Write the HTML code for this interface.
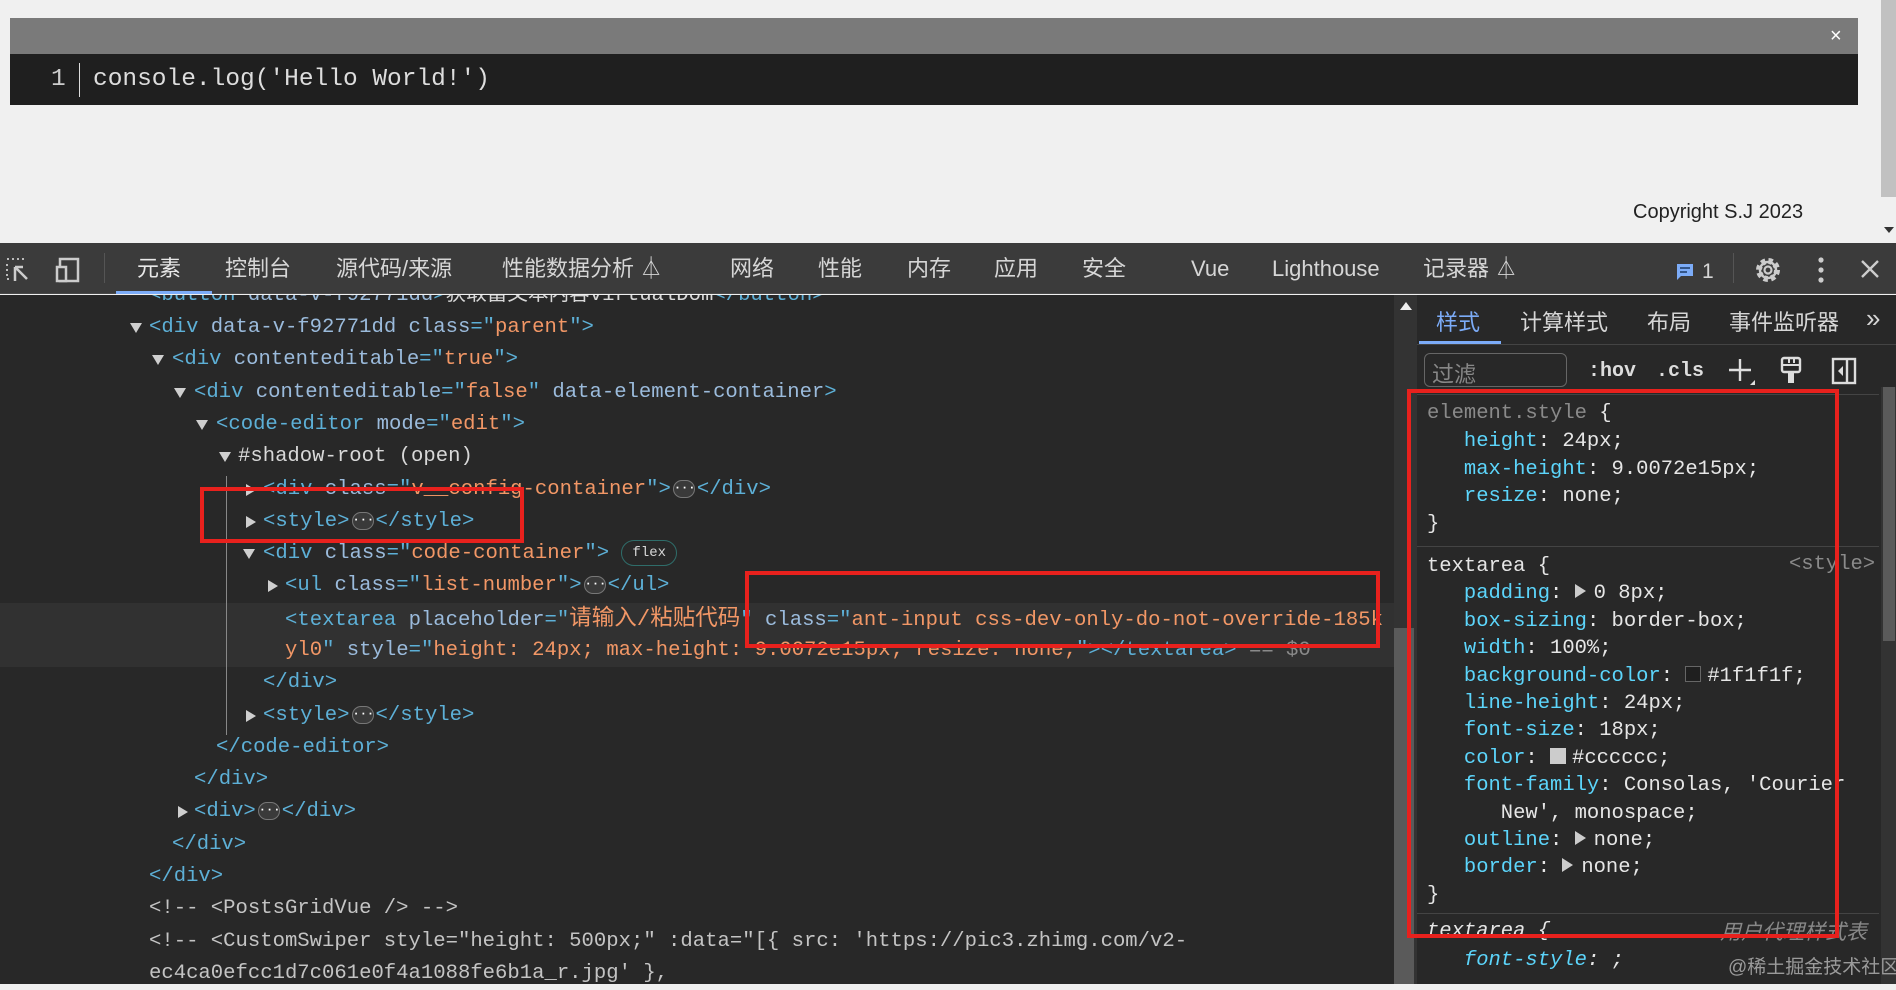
<!DOCTYPE html>
<html><head><meta charset="utf-8"><style>
*{margin:0;padding:0;box-sizing:border-box}
body{width:1896px;height:984px;overflow:hidden;background:#f0f0f0;position:relative;font-family:"Liberation Sans","Noto Sans CJK SC",sans-serif}
.a{position:absolute;white-space:pre}
.m{font-family:"Liberation Mono","Noto Sans CJK SC",monospace}
.t{color:#5db0d7}.n{color:#9bbbdc}.v{color:#f29766}.w{color:#d8d8d8}.g{color:#8a8a8a}
.p{color:#5cd5fb}.x{color:#e6e6e6}
.el{position:absolute;left:0;font-size:20.6px;line-height:32px;height:32px;white-space:pre;font-family:"Liberation Mono","Noto Sans CJK SC",monospace;color:#d8d8d8}
.cj{font-size:22.5px}
.tri{position:absolute;width:0;height:0}
.dn{border-left:6px solid transparent;border-right:6px solid transparent;border-top:10px solid #cfcfcf}
.rt{border-top:6px solid transparent;border-bottom:6px solid transparent;border-left:10px solid #cfcfcf}
.dots{display:inline-block;width:22px;height:18px;border:1px solid #777;border-radius:9px;background:#3a3a3a;color:#fff;font-size:12px;font-weight:bold;line-height:14px;text-align:center;vertical-align:middle;margin:0 2px}
.tb{position:absolute;top:256px;font-size:22px;color:#d6d6d6;line-height:26px}
.red{position:absolute;border:4px solid #e8211d}
.sr{position:absolute;left:1427px;font-size:20.5px;white-space:pre;font-family:"Liberation Mono",monospace;color:#e6e6e6}
.sw{display:inline-block;width:16px;height:16px;vertical-align:-1px;margin-right:6px}
.st{display:inline-block;width:0;height:0;border-top:7px solid transparent;border-bottom:7px solid transparent;border-left:11px solid #ccc;margin-right:8px;vertical-align:0}
</style></head><body>
<!-- top page -->
<div class="a" style="left:10px;top:18px;width:1848px;height:36px;background:#7a7a7a"></div>
<div class="a" style="left:1830px;top:25px;color:#fff;font-size:20px">×</div>
<div class="a" style="left:10px;top:54px;width:1848px;height:51px;background:#1f1f1f"></div>
<div class="a m" style="left:51px;top:64px;font-size:24.5px;color:#ccc;line-height:32px">1</div>
<div class="a" style="left:79px;top:63px;width:1px;height:34px;background:#ddd"></div>
<div class="a m" style="left:93px;top:64px;font-size:24.5px;color:#ddd;line-height:32px">console.log('Hello World!')</div>
<div class="a" style="left:1633px;top:201px;font-size:20px;color:#222">Copyright S.J 2023</div>
<div class="a" style="left:1881px;top:0;width:15px;height:197px;background:#c1c1c1"></div>
<div class="a" style="left:1884px;top:227px;width:0;height:0;border-left:5px solid transparent;border-right:5px solid transparent;border-top:6px solid #333"></div>

<!-- toolbar -->
<div class="a" style="left:0;top:243px;width:1896px;height:51px;background:#3b3b3b;border-bottom:1px solid #4a4a4a"></div>
<svg class="a" style="left:4px;top:256px" width="28" height="28" viewBox="0 0 28 28"><path d="M3 3h2M8 3h2M13 3h2M18 3h2M3 8v2M3 13v2M3 18v2M3 23h2" stroke="#bbb" stroke-width="2"/><path d="M11 11l0 14M11 11l12 12M11 11h8" stroke="#ccc" stroke-width="2.5" fill="none"/></svg>
<svg class="a" style="left:55px;top:256px" width="30" height="28" viewBox="0 0 30 28"><rect x="5" y="3" width="18" height="22" fill="none" stroke="#ccc" stroke-width="2.5"/><rect x="2" y="11" width="9" height="14" fill="#3b3b3b" stroke="#ccc" stroke-width="2.5"/></svg>
<div class="a" style="left:104px;top:253px;width:1px;height:30px;background:#555"></div>
<div class="tb" style="left:137px;color:#e8e8e8">元素</div>
<div class="a" style="left:116px;top:291px;width:96px;height:3px;background:#7cacf8"></div>
<div class="tb" style="left:225px">控制台</div>
<div class="tb" style="left:336px">源代码/来源</div>
<div class="tb" style="left:502px">性能数据分析 ⏃</div>
<div class="tb" style="left:730px">网络</div>
<div class="tb" style="left:818px">性能</div>
<div class="tb" style="left:907px">内存</div>
<div class="tb" style="left:994px">应用</div>
<div class="tb" style="left:1082px">安全</div>
<div class="tb" style="left:1191px">Vue</div>
<div class="tb" style="left:1272px">Lighthouse</div>
<div class="tb" style="left:1423px">记录器 ⏃</div>
<svg class="a" style="left:1675px;top:262px" width="20" height="20"><path d="M2 2h16v12H6l-4 4z" fill="#7cacf8"/><path d="M5 6h10M5 10h7" stroke="#1b3a66" stroke-width="1.6"/></svg>
<div class="tb" style="left:1702px;font-size:21px;top:259px">1</div>
<div class="a" style="left:1733px;top:253px;width:1px;height:30px;background:#555"></div>
<svg class="a" style="left:1753px;top:255px" width="30" height="30" viewBox="0 0 30 30"><circle cx="15" cy="15" r="9" fill="none" stroke="#ccc" stroke-width="6" stroke-dasharray="4 3.1"/><circle cx="15" cy="15" r="8" fill="none" stroke="#ccc" stroke-width="2.5"/><circle cx="15" cy="15" r="3.5" fill="none" stroke="#ccc" stroke-width="2.2"/></svg>
<svg class="a" style="left:1816px;top:256px" width="10" height="28"><circle cx="5" cy="4" r="2.6" fill="#ccc"/><circle cx="5" cy="14" r="2.6" fill="#ccc"/><circle cx="5" cy="24" r="2.6" fill="#ccc"/></svg>
<svg class="a" style="left:1859px;top:258px" width="22" height="22"><path d="M3 3l16 16M19 3L3 19" stroke="#ccc" stroke-width="2.4"/></svg>

<!-- elements panel -->
<div class="a" style="left:0;top:295px;width:1394px;height:689px;background:#282828;overflow:hidden">
 <div class="a" style="left:0;top:308px;width:1394px;height:64px;background:#313131"></div>
 <div class="a" style="left:226px;top:181px;width:1px;height:259px;background:#888"></div>
 <div class="el" style="top:-15px;left:149px"><span class="t">&lt;button</span> <span class="n">data-v-f92771dd</span><span class="t">&gt;</span>获取富文本内容virtualDom<span class="t">&lt;/button&gt;</span></div>
</div>
<div class="tri dn" style="left:130px;top:323px"></div>
<div class="el" style="top:312px;left:149px"><span class="t">&lt;div</span> <span class="n">data-v-f92771dd class</span><span class="t">="</span><span class="v">parent</span><span class="t">"&gt;</span></div>
<div class="tri dn" style="left:152px;top:355px"></div>
<div class="el" style="top:344px;left:172px"><span class="t">&lt;div</span> <span class="n">contenteditable</span><span class="t">="</span><span class="v">true</span><span class="t">"&gt;</span></div>
<div class="tri dn" style="left:174px;top:388px"></div>
<div class="el" style="top:377px;left:194px"><span class="t">&lt;div</span> <span class="n">contenteditable</span><span class="t">="</span><span class="v">false</span><span class="t">"</span> <span class="n">data-element-container</span><span class="t">&gt;</span></div>
<div class="tri dn" style="left:196px;top:420px"></div>
<div class="el" style="top:409px;left:216px"><span class="t">&lt;code-editor</span> <span class="n">mode</span><span class="t">="</span><span class="v">edit</span><span class="t">"&gt;</span></div>
<div class="tri dn" style="left:219px;top:452px"></div>
<div class="el" style="top:441px;left:238px">#shadow-root (open)</div>
<div class="tri rt" style="left:246px;top:484px"></div>
<div class="el" style="top:474px;left:263px"><span class="t">&lt;div</span> <span class="n">class</span><span class="t">="</span><span class="v">v__config-container</span><span class="t">"&gt;</span><span class="dots">···</span><span class="t">&lt;/div&gt;</span></div>
<div class="tri rt" style="left:246px;top:516px"></div>
<div class="el" style="top:506px;left:263px"><span class="t">&lt;style&gt;</span><span class="dots">···</span><span class="t">&lt;/style&gt;</span></div>
<div class="tri dn" style="left:243px;top:549px"></div>
<div class="el" style="top:538px;left:263px"><span class="t">&lt;div</span> <span class="n">class</span><span class="t">="</span><span class="v">code-container</span><span class="t">"&gt;</span> <span style="display:inline-block;font-size:14px;line-height:22px;height:26px;padding:1px 10px;border:1px solid #2f6d6a;border-radius:13px;vertical-align:middle">flex</span></div>
<div class="tri rt" style="left:268px;top:580px"></div>
<div class="el" style="top:570px;left:285px"><span class="t">&lt;ul</span> <span class="n">class</span><span class="t">="</span><span class="v">list-number</span><span class="t">"&gt;</span><span class="dots">···</span><span class="t">&lt;/ul&gt;</span></div>
<div class="el" style="top:603px;left:285px"><span class="t">&lt;textarea</span> <span class="n">placeholder</span><span class="t">="</span><span class="v cj">请输入/粘贴代码</span><span class="t">"</span> <span class="n">class</span><span class="t">="</span><span class="v">ant-input css-dev-only-do-not-override-185k</span></div>
<div class="el" style="top:635px;left:285px"><span class="v">yl0</span><span class="t">"</span> <span class="n">style</span><span class="t">="</span><span class="v">height: 24px; max-height: 9.0072e15px; resize: none;</span><span class="t">"&gt;&lt;/textarea&gt;</span> <span class="g">== $0</span></div>
<div class="el" style="top:667px;left:263px"><span class="t">&lt;/div&gt;</span></div>
<div class="tri rt" style="left:246px;top:710px"></div>
<div class="el" style="top:700px;left:263px"><span class="t">&lt;style&gt;</span><span class="dots">···</span><span class="t">&lt;/style&gt;</span></div>
<div class="el" style="top:732px;left:216px"><span class="t">&lt;/code-editor&gt;</span></div>
<div class="el" style="top:764px;left:194px"><span class="t">&lt;/div&gt;</span></div>
<div class="tri rt" style="left:178px;top:806px"></div>
<div class="el" style="top:796px;left:194px"><span class="t">&lt;div&gt;</span><span class="dots">···</span><span class="t">&lt;/div&gt;</span></div>
<div class="el" style="top:829px;left:172px"><span class="t">&lt;/div&gt;</span></div>
<div class="el" style="top:861px;left:149px"><span class="t">&lt;/div&gt;</span></div>
<div class="el" style="top:893px;left:149px;color:#c4c4c4">&lt;!-- &lt;PostsGridVue /&gt; --&gt;</div>
<div class="el" style="top:926px;left:149px;color:#c4c4c4">&lt;!-- &lt;CustomSwiper style="height: 500px;" :data="[{ src: 'https://pic3.zhimg.com/v2-</div>
<div class="el" style="top:958px;left:149px;color:#c4c4c4">ec4ca0efcc1d7c061e0f4a1088fe6b1a_r.jpg' },</div>

<!-- left scrollbar -->
<div class="a" style="left:1394px;top:295px;width:23px;height:689px;background:#333"></div>
<div class="a" style="left:1394px;top:628px;width:20px;height:356px;background:#5a5a5a"></div>
<div class="a" style="left:1400px;top:302px;width:0;height:0;border-left:6px solid transparent;border-right:6px solid transparent;border-bottom:8px solid #eee"></div>

<!-- right panel -->
<div class="a" style="left:1417px;top:295px;width:479px;height:689px;background:#282828"></div>
<div class="a" style="left:1417px;top:344px;width:479px;height:1px;background:#444"></div>
<div class="a" style="left:1436px;top:305px;font-size:22px;color:#7cacf8">样式</div>
<div class="a" style="left:1520px;top:305px;font-size:22px;color:#d6d6d6">计算样式</div>
<div class="a" style="left:1647px;top:305px;font-size:22px;color:#d6d6d6">布局</div>
<div class="a" style="left:1729px;top:305px;font-size:22px;color:#d6d6d6">事件监听器</div>
<div class="a" style="left:1866px;top:303px;font-size:26px;color:#d6d6d6">»</div>
<div class="a" style="left:1419px;top:341px;width:82px;height:3px;background:#7cacf8"></div>
<div class="a" style="left:1424px;top:353px;width:143px;height:34px;border:1px solid #666;border-radius:6px"></div>
<div class="a" style="left:1432px;top:357px;font-size:22px;color:#888">过滤</div>
<div class="a m" style="left:1588px;top:360px;font-size:20px;color:#ddd;font-weight:bold">:hov</div>
<div class="a m" style="left:1656px;top:360px;font-size:20px;color:#ddd;font-weight:bold">.cls</div>
<svg class="a" style="left:1727px;top:356px" width="30" height="30"><path d="M13 3v22M2 14h22" stroke="#ddd" stroke-width="2.4"/><path d="M28 24v5h-5z" fill="#ddd"/></svg>
<svg class="a" style="left:1780px;top:356px" width="24" height="30"><rect x="2" y="2" width="18" height="14" rx="2" fill="none" stroke="#ddd" stroke-width="2.4"/><path d="M2 9h18M9 2v5M14 2v5" stroke="#ddd" stroke-width="2"/><rect x="8" y="16" width="6" height="11" fill="#ddd"/></svg>
<svg class="a" style="left:1831px;top:357px" width="28" height="28"><rect x="2" y="2" width="22" height="24" fill="none" stroke="#ddd" stroke-width="2.4"/><path d="M16 2v24" stroke="#ddd" stroke-width="2.4"/><path d="M12 9v10l-5-5z" fill="#ddd"/></svg>
<div class="a" style="left:1417px;top:394px;width:462px;height:1px;background:#444"></div>
<div class="a" style="left:1881px;top:387px;width:15px;height:597px;background:#333"></div>
<div class="a" style="left:1883px;top:387px;width:12px;height:254px;background:#5a5a5a"></div>

<div class="sr" style="top:400px;line-height:27.8px"><span style="color:#8a8a8a">element.style</span> {
   <span class="p">height</span>: 24px;
   <span class="p">max-height</span>: 9.0072e15px;
   <span class="p">resize</span>: none;
}</div>
<div class="a" style="left:1417px;top:546px;width:462px;height:1px;background:#444"></div>
<div class="sr" style="top:553px;line-height:27.4px">textarea {
   <span class="p">padding</span>: <span class="st"></span>0 8px;
   <span class="p">box-sizing</span>: border-box;
   <span class="p">width</span>: 100%;
   <span class="p">background-color</span>: <span class="sw" style="background:#1f1f1f;border:1px solid #666"></span>#1f1f1f;
   <span class="p">line-height</span>: 24px;
   <span class="p">font-size</span>: 18px;
   <span class="p">color</span>: <span class="sw" style="background:#ccc"></span>#cccccc;
   <span class="p">font-family</span>: Consolas, 'Courier
      New', monospace;
   <span class="p">outline</span>: <span class="st"></span>none;
   <span class="p">border</span>: <span class="st"></span>none;
}</div>
<div class="a" style="left:1789px;top:553px;font-size:20.5px;color:#8a8a8a;font-family:'Liberation Mono',monospace">&lt;style&gt;</div>
<div class="a" style="left:1417px;top:913px;width:462px;height:1px;background:#444"></div>
<div class="sr" style="top:917px;line-height:29px;font-style:italic">textarea {
   <span class="p">font-style</span>: ;</div>
<div class="a" style="left:1720px;top:916px;font-size:21px;color:#888;font-style:italic">用户代理样式表</div>
<div class="a" style="left:1728px;top:952px;font-size:19px;color:#9a9a9a">@稀土掘金技术社区</div>

<!-- red boxes -->
<div class="red" style="left:200px;top:487px;width:324px;height:56px"></div>
<div class="red" style="left:745px;top:571px;width:635px;height:77px"></div>
<div class="red" style="left:1407px;top:389px;width:432px;height:549px"></div>
</body></html>
